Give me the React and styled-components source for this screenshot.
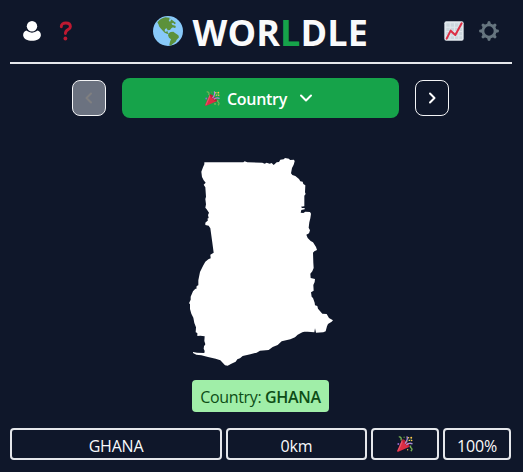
import React from "react";
import styled, { createGlobalStyle } from "styled-components";

const GlobalStyle = createGlobalStyle`
  * { box-sizing: border-box; }
  body {
    margin: 0;
    background: #0f172a;
    color: #f9fafb;
    font-family: "Segoe UI", "Open Sans", "Noto Sans", sans-serif;
    overflow: hidden;
  }
  button { font: inherit; color: inherit; padding: 0; margin: 0; }
  svg { display: block; flex: none; }
`;

const Page = styled.div`
  width: 523px;
  height: 472px;
  padding: 0 11px 0 10px;
  display: flex;
  flex-direction: column;
`;

const Header = styled.header`
  height: 64px;
  border-bottom: 2px solid #e5e7eb;
  display: flex;
  align-items: center;
  justify-content: space-between;
  padding: 0 13px 0 12px;
`;

const HeaderActions = styled.div`
  width: 55px;
  display: flex;
  align-items: center;
  gap: ${(p) => p.$gap};
`;

const IconButton = styled.button`
  background: none;
  border: 0;
  display: flex;
`;

const Title = styled.h1`
  margin: 0 1px 0 0;
  display: flex;
  align-items: center;
  gap: 10px;
  font-size: 36px;
  line-height: 40px;
  font-weight: 700;
`;

const TitleText = styled.span`
  width: 175px;
  padding-top: 4px;
  white-space: nowrap;
  letter-spacing: 0.1px;
`;

const Green = styled.span`
  color: #16a34a;
`;

const Selector = styled.nav`
  margin-top: 14px;
  padding-right: 1px;
  display: flex;
  align-items: center;
  justify-content: center;
  gap: 16px;
`;

const StepButton = styled.button`
  width: 34px;
  height: 36px;
  display: flex;
  align-items: center;
  justify-content: center;
  border: 1px solid #f3f4f6;
  border-radius: 8px;
  background: ${(p) => (p.disabled ? "#6b7280" : "transparent")};
  color: ${(p) => (p.disabled ? "#7f7f80" : "#fff")};
`;

const ModeButton = styled.button`
  width: 277px;
  height: 40px;
  padding-right: 4px;
  border: 0;
  border-radius: 8px;
  background: #16a34a;
  color: #fff;
  display: flex;
  align-items: center;
  justify-content: center;
  font-size: 16px;
  font-weight: 600;
`;

const ModeLabel = styled.span`
  width: 60px;
  margin: 2px 13px 0 7px;
  text-align: left;
  white-space: nowrap;
  letter-spacing: -0.3px;
`;

const MapArea = styled.main`
  height: 262px;
  padding: 32px 0 0 170px;
`;

const Answer = styled.div`
  align-self: center;
  width: 137px;
  height: 32px;
  margin-right: 1px;
  border-radius: 4px;
  background: #a0eea8;
  color: #0d4d16;
  font-size: 16px;
  line-height: 35px;
  text-align: center;
  white-space: nowrap;
  letter-spacing: -0.35px;
`;

const Strong = styled.strong`
  font-weight: 600;
`;

const GuessRow = styled.div`
  margin-top: 16px;
  display: grid;
  grid-template-columns: 212px 141px 68px 68px;
  column-gap: 4px;
`;

const Cell = styled.div`
  height: 32px;
  border: 2px solid #e5e7eb;
  border-radius: 4px;
  display: flex;
  align-items: center;
  justify-content: center;
  padding-top: ${(p) => (p.$icon ? 0 : "3px")};
  font-size: 16px;
  line-height: 24px;
  letter-spacing: -0.2px;
`;

const UserIcon = () => (
  <svg width="20" height="22" viewBox="0 0 20 22" fill="#fff">
    <circle cx="10" cy="6.2" r="5.2" />
    <path d="M4.3 10.6Q10 14.8 15.7 10.6Q18.8 12 18.9 15.2C18.5 19 14.5 20.8 10 20.8S1.5 19 1.1 15.2Q1.2 12 4.3 10.6Z" />
  </svg>
);

const QuestionIcon = () => (
  <svg width="14" height="20" viewBox="0 0 14 20">
    <path d="M2.3 5.8C2.2 3 4.3 2 6.8 2C9.7 2 11.4 3.5 11.4 5.7C11.4 9 6.4 8.2 6.4 12.5" fill="none" stroke="#be1931" strokeWidth="2.9" strokeLinecap="round" strokeLinejoin="round" />
    <circle cx="6.4" cy="17.5" r="1.9" fill="#be1931" />
  </svg>
);

const GlobeIcon = () => (
  <svg width="30" height="30" viewBox="0 0 90 90">
    <circle cx="45" cy="45" r="45" fill="#88c9f9" />
    <g fill="#5c913b">
      <path d="M13 19Q22 7 37 4L50 5L54 9L47 13L51 18L55 10L60 14L69 21L65 25L60 20L55 23L59 27L67 29L69 34L64 36L60 34L55 37L51 42L44 43L41 37L36 39L35 46L39 48L43 44L44 49L47 55L42 53L35 50L28 43L22 36L18 31L17 26Z" />
      <path d="M47 52L53 48L61 47L67 52L76 58L78 64L71 71L68 77L59 84L53 89L49 86L51 77L54 70L48 65L45 58Z" />
    </g>
    <path d="M49 7L56 8L55 12L49 11Z" fill="#88c9f9" />
  </svg>
);

const ChartIcon = () => (
  <svg width="20" height="20" viewBox="0 0 60 60">
    <rect x="1" y="1" width="58" height="58" rx="6" fill="#e1e8ed" />
    <g fill="#ccd6dd">
      <path d="M7 7h10v10H7zM20 7h10v10H20zM33 7h10v10H33zM46 7h8v10h-8zM7 20h10v10H7zM20 20h10v10H20zM33 20h10v10H33zM46 20h8v10h-8zM7 33h10v10H7zM20 33h10v10H20zM33 33h10v10H33zM46 33h8v10h-8zM7 46h10v8H7zM20 46h10v8H20zM33 46h10v8H33zM46 46h8v8h-8z" />
    </g>
    <path d="M8 53L20 29L34 42L53 7" fill="none" stroke="#dd2e44" strokeWidth="6" strokeLinecap="round" strokeLinejoin="round" />
  </svg>
);

const TEETH = [0, 45, 90, 135, 180, 225, 270, 315];

const GearIcon = () => (
  <svg width="20" height="20" viewBox="0 0 20 20">
    <circle cx="10" cy="10" r="6.1" fill="none" stroke="#66757f" strokeWidth="2.8" />
    {TEETH.map((a) => (
      <path key={a} d="M7.9 3.8L8.8 .5Q10 -.4 11.2 .5L12.1 3.8Z" fill="#66757f" transform={`rotate(${a} 10 10)`} />
    ))}
  </svg>
);

const PartyIcon = ({ size }) => (
  <svg width={size} height={size} viewBox="0 0 36 36">
    <path d="M11.6 7.6L.3 33.1C-.3 34.5 1.4 36.2 2.9 35.6L28.4 24.3Z" fill="#dd2e44" />
    <path d="M13 12L4.5 31.5L1 34.5L11.3 9Z" fill="#ea596e" />
    <ellipse cx="20" cy="16" rx="3.4" ry="11.2" transform="rotate(-45 20 16)" fill="#be1f35" />
    <path d="M18 17Q26 7 22 1" fill="none" stroke="#aa8dd8" strokeWidth="3" />
    <path d="M4 2Q11 1 9 10" fill="none" stroke="#77b255" strokeWidth="3" />
    <path d="M21 20Q28 14 35 18" fill="none" stroke="#aa8dd8" strokeWidth="3" />
    <path d="M32 22Q28 24 32 27T31 34" fill="none" stroke="#77b255" strokeWidth="3" />
    <path d="M21 14Q26 7 33 9" fill="none" stroke="#77b255" strokeWidth="1.5" />
    <g fill="#ffcc4d">
      <circle cx="26" cy="4" r="1.8" />
      <circle cx="32" cy="4" r="2.2" />
      <circle cx="33" cy="10" r="1.7" />
      <circle cx="28" cy="10" r="1.5" />
      <circle cx="24" cy="31" r="1.5" />
    </g>
    <circle cx="3" cy="18" r="2.2" fill="#9266cc" />
    <circle cx="16" cy="3" r="1.6" fill="#5c913b" />
  </svg>
);

const Chevron = ({ d, width, height }) => (
  <svg width={width} height={height} viewBox={`0 0 ${width} ${height}`} fill="none" stroke="currentColor" strokeWidth="2" strokeLinecap="round" strokeLinejoin="round">
    <path d={d} />
  </svg>
);

const GhanaMap = () => (
  <svg width="160" height="220" viewBox="0 0 480 660" role="img" aria-label="Ghana">
    <path
      fill="#fff"
      d="M73 37L190 37L194 34L202 37L247 38L254 41L260 38L269 41L275 39L281 45L290 37L297 36L301 29L311 28L315 24L327 26L330 30L342 29L344 34L341 44L336 54L333 70L337 75L346 78L357 87L361 94L368 95L370 102L376 106L375 127L377 132L373 137L373 169L363 170L366 174L374 174L374 178L364 180L362 188L370 189L376 185L390 186L393 191L391 205L388 217L386 233L390 241L387 250L379 254L383 264L392 273L399 277L408 291L411 300L403 304L399 308L400 338L401 354L397 364L391 371L392 384L405 387L404 396L400 405L401 422L393 427L395 440L399 444L404 458L405 466L412 468L414 476L427 491L440 492L447 504L459 511L455 515L444 522L441 529L437 544L430 547L408 548L405 535L403 547L383 545L373 545L367 547L353 554L345 562L331 568L305 574L293 585L278 591L266 600L240 602L230 608L211 613L188 618L180 625L172 628L167 635L154 641L143 647L135 646L128 638L121 631L107 626L84 621L64 616L49 614L39 609L39 606L51 608L73 609L74 603L71 596L72 589L76 583L73 573L74 559L61 557L52 558L52 549L47 547L48 532L43 519L40 503L34 491L30 477L30 462L27 460L32 449L32 440L39 424L46 416L49 417L50 408L55 406L55 391L60 366L70 346L76 335L85 328L92 325L91 314L101 308L97 278L91 235L86 227L76 225L76 218L84 211L82 206L86 204L84 195L87 188L80 178L76 173L78 163L76 147L78 140L76 112L71 104L77 98L71 91L66 81L64 65L69 52L73 43Z"
    />
  </svg>
);

export default function App() {
  return (
    <>
      <GlobalStyle />
      <Page>
        <Header>
          <HeaderActions $gap="17px">
            <IconButton aria-label="Profile"><UserIcon /></IconButton>
            <IconButton aria-label="Help"><QuestionIcon /></IconButton>
          </HeaderActions>
          <Title>
            <GlobeIcon />
            <TitleText>WOR<Green>L</Green>DLE</TitleText>
          </Title>
          <HeaderActions $gap="15px">
            <IconButton aria-label="Statistics"><ChartIcon /></IconButton>
            <IconButton aria-label="Settings"><GearIcon /></IconButton>
          </HeaderActions>
        </Header>
        <Selector>
          <StepButton disabled aria-label="Previous">
            <Chevron width={8} height={12} d="M6 1.5L1.5 6L6 10.5" />
          </StepButton>
          <ModeButton>
            <PartyIcon size={15} />
            <ModeLabel>Country</ModeLabel>
            <Chevron width={12} height={8} d="M1 1.5L6 6.5L11 1.5" />
          </ModeButton>
          <StepButton aria-label="Next">
            <Chevron width={8} height={12} d="M2 1.5L6.5 6L2 10.5" />
          </StepButton>
        </Selector>
        <MapArea>
          <GhanaMap />
        </MapArea>
        <Answer>Country: <Strong>GHANA</Strong></Answer>
        <GuessRow>
          <Cell>GHANA</Cell>
          <Cell>0km</Cell>
          <Cell $icon><PartyIcon size={16} /></Cell>
          <Cell>100%</Cell>
        </GuessRow>
      </Page>
    </>
  );
}
